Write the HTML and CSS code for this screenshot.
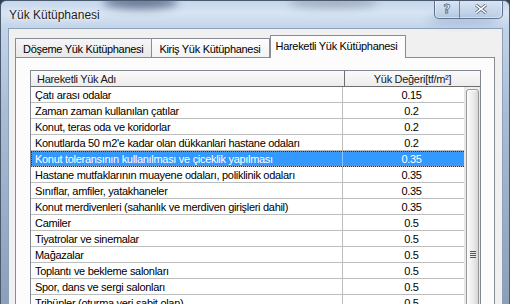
FILE: index.html
```html
<!DOCTYPE html>
<html lang="tr">
<head>
    <meta charset="UTF-8">
    <meta name="viewport" content="width=device-width, initial-scale=1.0">
    <title>Yük Kütüphanesi</title>
    <link rel="stylesheet" href="styles.css">
</head>
<body>

    <div class="window">
        <div class="titlebar">
            <div class="glass-blob blob-1"></div>
            <div class="glass-blob blob-2"></div>
            <div class="glass-blob blob-3"></div>
            <span class="title">Yük Kütüphanesi</span>
            <div class="caption-buttons">
                <div class="cap-btn help"><span>?</span></div>
                <div class="cap-btn close">
                    <svg width="12" height="10" viewBox="0 0 12 10">
                        <path d="M1 1 L11 9 M11 1 L1 9" stroke="#5d6b7e" stroke-width="3.2" stroke-linecap="square"/>
                        <path d="M1 1 L11 9 M11 1 L1 9" stroke="#ffffff" stroke-width="1.6" stroke-linecap="square"/>
                    </svg>
                </div>
            </div>
        </div>

        <div class="client">
            <div class="tabs">
                <div class="tab">Döşeme Yük Kütüphanesi</div>
                <div class="tab">Kiriş Yük Kütüphanesi</div>
                <div class="tab active">Hareketli Yük Kütüphanesi</div>
            </div>

            <div class="tab-page">
                <div class="grid">
                    <div class="grid-head">
                        <div class="head-cell">Hareketli Yük Adı</div>
                        <div class="head-cell value">Yük Değeri[tf/m²]</div>
                    </div>
                    <div class="grid-body">
                        <div class="row"><span class="name">Çatı arası odalar</span><span class="value">0.15</span></div>
                        <div class="row"><span class="name">Zaman zaman kullanılan çatılar</span><span class="value">0.2</span></div>
                        <div class="row"><span class="name">Konut, teras oda ve koridorlar</span><span class="value">0.2</span></div>
                        <div class="row"><span class="name">Konutlarda 50 m2'e kadar olan dükkanlari hastane odaları</span><span class="value">0.2</span></div>
                        <div class="row selected"><span class="name">Konut toleransının kullanılması ve çiceklik yapılması</span><span class="value">0.35</span></div>
                        <div class="row"><span class="name">Hastane mutfaklarının muayene odaları, poliklinik odaları</span><span class="value">0.35</span></div>
                        <div class="row"><span class="name">Sınıflar, amfiler, yatakhaneler</span><span class="value">0.35</span></div>
                        <div class="row"><span class="name">Konut merdivenleri (sahanlık ve merdiven girişleri dahil)</span><span class="value">0.35</span></div>
                        <div class="row"><span class="name">Camiler</span><span class="value">0.5</span></div>
                        <div class="row"><span class="name">Tiyatrolar ve sinemalar</span><span class="value">0.5</span></div>
                        <div class="row"><span class="name">Mağazalar</span><span class="value">0.5</span></div>
                        <div class="row"><span class="name">Toplantı ve bekleme salonları</span><span class="value">0.5</span></div>
                        <div class="row"><span class="name">Spor, dans ve sergi salonları</span><span class="value">0.5</span></div>
                        <div class="row"><span class="name">Tribünler (oturma yeri sabit olan)</span><span class="value">0.5</span></div>

                        <div class="vscroll">
                            <div class="thumb"><span class="grip"></span></div>
                        </div>
                    </div>
                </div>
            </div>
        </div>
    </div>

</body>
</html>
```

FILE: styles.css
```css
* {
    margin: 0;
    padding: 0;
    box-sizing: border-box;
}

body {
    width: 510px;
    height: 304px;
    overflow: hidden;
    background: #2f3d50;
    font-family: 'Liberation Sans', Arial, sans-serif;
    font-size: 11px;
    letter-spacing: -0.3px;
    color: #000;
}

/* window frame (aero glass) */
.window {
    height: 304px;
    display: flex;
    flex-direction: column;
    padding: 0 6px 0 7px;
    border: 1px solid #4b5a6e;
    border-bottom: none;
    border-radius: 6px 6px 0 0;
    background: linear-gradient(180deg, #c6d7ec 0px, #d7e4f3 12px, #c3d4e9 27px, #a9bdd5 110px, #8b9fba 304px);
    overflow: hidden;
}

.titlebar {
    position: relative;
    height: 27px;
    display: flex;
    align-items: flex-start;
    flex-shrink: 0;
}

.glass-blob {
    position: absolute;
    border-radius: 50%;
    filter: blur(4px);
    pointer-events: none;
}

.blob-1 {
    left: 95px;
    top: -6px;
    width: 75px;
    height: 14px;
    background: rgba(30, 45, 80, 0.55);
}

.blob-2 {
    left: 280px;
    top: -4px;
    width: 90px;
    height: 11px;
    background: rgba(80, 90, 110, 0.35);
}

.blob-3 {
    left: 420px;
    top: 14px;
    width: 70px;
    height: 10px;
    background: rgba(110, 140, 190, 0.35);
}

.title {
    position: relative;
    padding: 7px 0 0 1px;
    font-family: 'Liberation Sans', Arial, sans-serif;
    font-size: 12px;
    line-height: 15px;
    letter-spacing: 0;
    color: #1c1c1c;
    text-shadow: 0 0 6px rgba(255, 255, 255, 0.95), 0 0 2px rgba(255, 255, 255, 0.8);
}

.caption-buttons {
    position: relative;
    display: flex;
    margin-left: auto;
    margin-top: -1px;
    height: 19px;
    border: 1px solid rgba(60, 78, 104, 0.75);
    border-top: none;
    border-radius: 0 0 5px 5px;
    box-shadow: inset 0 0 0 1px rgba(255, 255, 255, 0.45);
    background: linear-gradient(180deg, rgba(235, 242, 250, 0.55), rgba(190, 208, 232, 0.45) 50%, rgba(170, 192, 222, 0.5));
    overflow: hidden;
}

.cap-btn {
    display: flex;
    align-items: center;
    justify-content: center;
}

.cap-btn.help {
    width: 25px;
    border-right: 1px solid rgba(60, 78, 104, 0.6);
}

.cap-btn.help span {
    font-family: 'DejaVu Sans', sans-serif;
    font-size: 12px;
    font-weight: bold;
    color: #fff;
    -webkit-text-stroke: 0.8px #5d6b7e;
    letter-spacing: 0;
}

.cap-btn.close {
    width: 42px;
}

/* client area */
.client {
    flex: 1;
    border: 1px solid #8da0b8;
    border-bottom: none;
    background: #f0f0f0;
    padding: 6px 7px 0 6px;
    display: flex;
    flex-direction: column;
}

.tabs {
    display: flex;
    align-items: flex-end;
    height: 22px;
    position: relative;
    z-index: 1;
}

.tab {
    height: 19px;
    padding: 3px 8px 0 7px;
    line-height: 14px;
    border: 1px solid #898c95;
    border-bottom: none;
    margin-right: -1px;
    background: linear-gradient(180deg, #f6f6f6, #e8e8e8);
    white-space: nowrap;
}

.tab:nth-child(2) {
    background: linear-gradient(180deg, #fdfdfd, #f3f3f3);
}

.tab.active {
    height: 23px;
    margin: 0 0 -1px 1px;
    padding: 3px 8px 0 5px;
    background: #fcfcfc;
}

.tab-page {
    flex: 1;
    border: 1px solid #898c95;
    border-bottom: none;
    background: #fcfcfc;
    padding: 12px 13px 0 14px;
}

/* data grid */
.grid {
    border: 1px solid #828790;
    border-bottom: none;
    background: #fff;
    height: 240px;
}

.grid-head {
    display: grid;
    grid-template-columns: 314px 1fr;
    height: 16px;
    border-bottom: 1px solid #6e6e6e;
    background: linear-gradient(180deg, #fafafa, #ececec);
}

.head-cell {
    padding: 1px 0 0 6px;
    line-height: 14px;
    border-right: 1px solid #6e6e6e;
    color: #1a1a1a;
}

.head-cell.value {
    padding-left: 0;
    text-align: center;
    border-right: none;
}

.grid-body {
    position: relative;
}

.row {
    display: grid;
    grid-template-columns: 312px 1fr;
    height: 16px;
    border-bottom: 1px solid #bdbdbd;
    white-space: nowrap;
}

.row .name {
    padding: 1px 0 0 4px;
    line-height: 14px;
    border-right: 1px solid #bdbdbd;
    overflow: hidden;
}

.row .value {
    padding-top: 1px;
    line-height: 14px;
    text-align: center;
}

.row.selected {
    background: #3399ff;
    color: #fff;
    outline: 1px dotted #1f3150;
    outline-offset: -1px;
}

.row.selected .name {
    border-right-color: #8fc4ff;
}

/* vertical scroll bar sits over the right edge of the rows */
.vscroll {
    position: absolute;
    top: 0;
    right: 0;
    width: 16px;
    height: 240px;
    background: linear-gradient(90deg, #e6e6e6, #f2f2f2 40%, #e9e9e9);
    padding: 2px 1px 0 2px;
}

.thumb {
    height: 330px;
    border: 1px solid #979797;
    border-radius: 3px;
    background: linear-gradient(90deg, #fbfbfb, #ececec 55%, #d6d6d6);
    box-shadow: inset 1px 1px 0 #fff;
    display: flex;
    align-items: center;
    justify-content: center;
}

.grip {
    width: 6px;
    height: 7px;
    background: repeating-linear-gradient(180deg, #555 0px, #555 1px, transparent 1px, transparent 2px);
}
```
